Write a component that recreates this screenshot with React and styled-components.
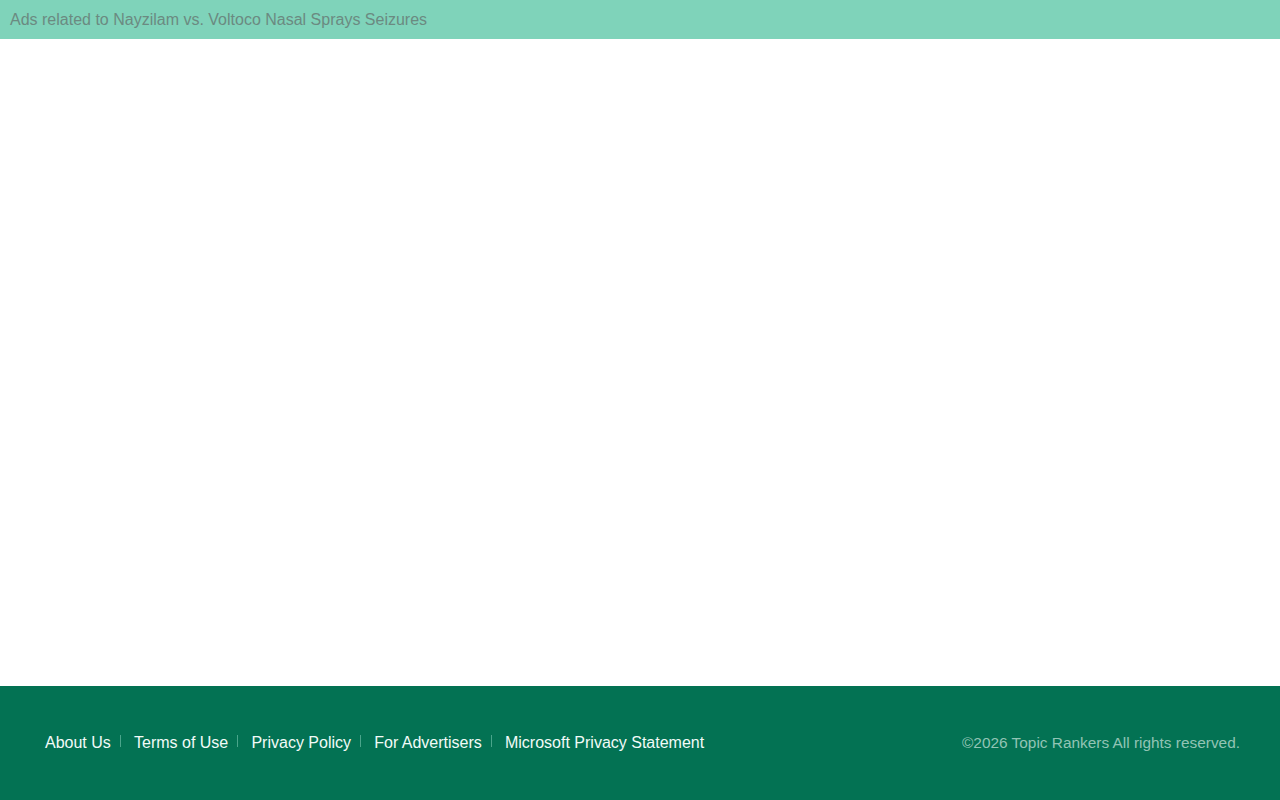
import styled, { createGlobalStyle } from "styled-components";

const GlobalStyle = createGlobalStyle`
  html, body {
    margin: 0;
    padding: 0;
    background: #fff;
    font-family: "Liberation Sans", Arial, sans-serif;
  }
`;

const Page = styled.div`
  height: 800px;
  display: flex;
  flex-direction: column;
  overflow: hidden;
`;

const TopBar = styled.div`
  height: 39px;
  flex-shrink: 0;
  display: flex;
  align-items: center;
  padding-left: 10px;
  background: #7fd3ba;
  color: #6b8a81;
  font-size: 16px;
`;

const Main = styled.main`
  flex: 1;
`;

const Footer = styled.footer`
  height: 114px;
  flex-shrink: 0;
  display: flex;
  align-items: center;
  justify-content: space-between;
  padding: 0 40px 0 45px;
  background: #037253;
`;

const FooterLinks = styled.ul`
  display: flex;
  align-items: center;
  margin: 0;
  padding: 0;
  list-style: none;
`;

const FooterItem = styled.li`
  display: flex;
  align-items: center;

  & + &::before {
    content: "";
    width: 1px;
    height: 12px;
    margin: -4px 13.2px 0 9px;
    background: #4aa58b;
  }
`;

const FooterLink = styled.a`
  color: #f2fbf8;
  font-size: 16px;
  text-decoration: none;
`;

const Copyright = styled.div`
  color: #92c4b5;
  font-size: 15.4px;
`;

const links = ["About Us", "Terms of Use", "Privacy Policy", "For Advertisers", "Microsoft Privacy Statement"];

export default function App() {
  return (
    <Page>
      <GlobalStyle />
      <TopBar>Ads related to Nayzilam vs. Voltoco Nasal Sprays Seizures</TopBar>
      <Main />
      <Footer>
        <FooterLinks>
          {links.map((link) => (
            <FooterItem key={link}>
              <FooterLink href="#">{link}</FooterLink>
            </FooterItem>
          ))}
        </FooterLinks>
        <Copyright>©2026 Topic Rankers All rights reserved.</Copyright>
      </Footer>
    </Page>
  );
}
